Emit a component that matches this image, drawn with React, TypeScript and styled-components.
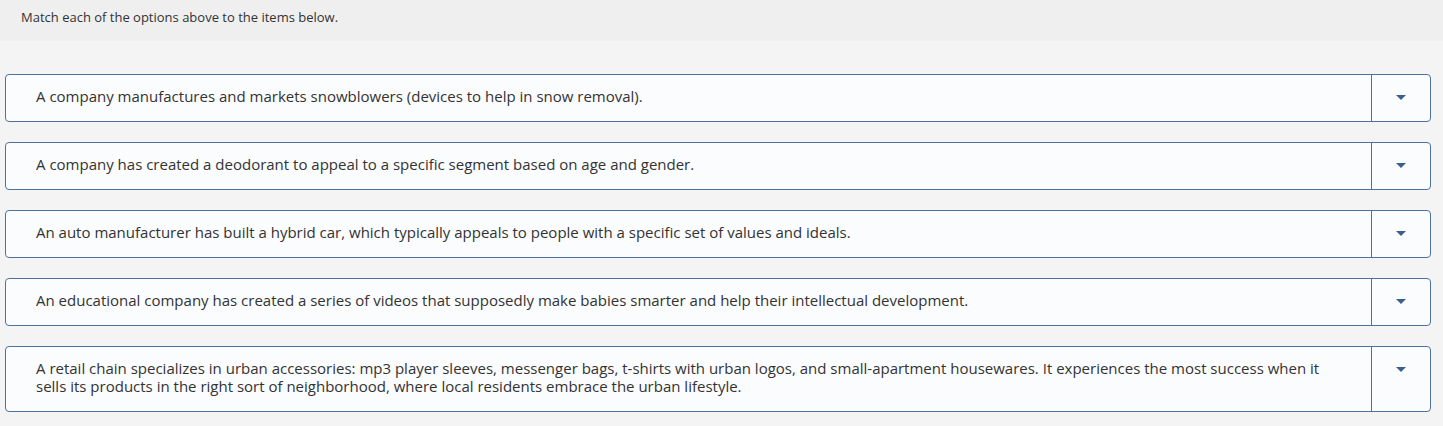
import React from 'react';
import styled, { createGlobalStyle } from 'styled-components';

const GlobalStyle = createGlobalStyle`
  html, body {
    margin: 0;
    padding: 0;
    background: #f4f4f4;
  }
  body {
    font-family: 'Open Sans', 'Liberation Sans', sans-serif;
    color: #333;
  }
`;

const Page = styled.div`
  width: 1443px;
  height: 426px;
  background: #f4f4f4;
  overflow: hidden;
`;

const Prompt = styled.div`
  height: 41px;
  background: #efefef;
  padding: 9px 0 0 21px;
  box-sizing: border-box;
  font-size: 13px;
  line-height: 17px;
  color: #333;
`;

const List = styled.div`
  display: flex;
  flex-direction: column;
  gap: 20px;
  padding: 33px 12px 0 5px;
`;

const Row = styled.div`
  display: flex;
  box-sizing: border-box;
  border: 1px solid #4d72a0;
  border-radius: 4px;
  background: #fbfcfd;
`;

const Label = styled.div`
  flex: 1;
  display: flex;
  align-items: center;
  padding: 12px 28px 16px 30px;
  font-size: 15px;
  line-height: 18px;
  color: #333;
`;

const Toggle = styled.div`
  width: 59px;
  border-left: 1px solid #4d72a0;
  display: flex;
  align-items: flex-start;
  justify-content: center;
  padding-top: 20px;
  box-sizing: border-box;
`;

const Caret = styled.span`
  width: 0;
  height: 0;
  border-left: 5px solid transparent;
  border-right: 5px solid transparent;
  border-top: 5px solid #3d5f8f;
`;

const items = [
  'A company manufactures and markets snowblowers (devices to help in snow removal).',
  'A company has created a deodorant to appeal to a specific segment based on age and gender.',
  'An auto manufacturer has built a hybrid car, which typically appeals to people with a specific set of values and ideals.',
  'An educational company has created a series of videos that supposedly make babies smarter and help their intellectual development.',
  'A retail chain specializes in urban accessories: mp3 player sleeves, messenger bags, t-shirts with urban logos, and small-apartment housewares. It experiences the most success when it sells its products in the right sort of neighborhood, where local residents embrace the urban lifestyle.',
];

export default function App() {
  return (
    <Page>
      <GlobalStyle />
      <Prompt>Match each of the options above to the items below.</Prompt>
      <List>
        {items.map((text, idx) => (
          <Row key={idx}>
            <Label>{text}</Label>
            <Toggle>
              <Caret />
            </Toggle>
          </Row>
        ))}
      </List>
    </Page>
  );
}
